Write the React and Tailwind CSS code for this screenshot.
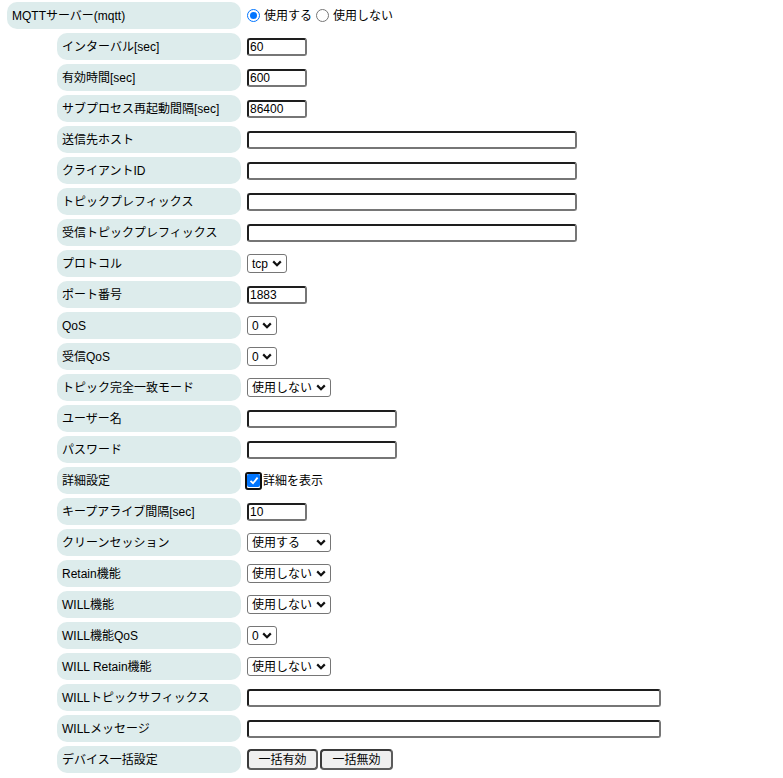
import React from "react";

const font = { fontFamily: '"Liberation Sans", Arial, "Noto Sans CJK JP", sans-serif' };

function Chevron() {
  return (
    <svg width="10" height="7" viewBox="0 0 10 7" className="shrink-0">
      <path d="M1.2 1.4 L5 5.2 L8.8 1.4" fill="none" stroke="#111" strokeWidth="2.2" />
    </svg>
  );
}

function TextBox({ value = "", width }) {
  return (
    <input
      readOnly
      value={value}
      style={{ width }}
      className="h-[18px] rounded-[3px] border-2 border-t-[#1e1e1e] border-l-[#1e1e1e] border-b-[#767676] border-r-[#767676] bg-white pl-[1px] text-[12px] leading-none text-black outline-none"
    />
  );
}

function Select({ value, width }) {
  return (
    <div
      style={{ width }}
      className="flex h-[19px] items-center justify-between rounded-[3px] border border-[#767676] bg-white pl-[4px] pr-[4px] text-[12px] text-black"
    >
      <span className="whitespace-pre">{value}</span>
      <Chevron />
    </div>
  );
}

function Radio({ checked }) {
  return checked ? (
    <span className="flex h-[13px] w-[13px] shrink-0 items-center justify-center rounded-full border-[1.5px] border-[#0075ff] bg-white">
      <span className="block h-[7px] w-[7px] rounded-full bg-[#0075ff]" />
    </span>
  ) : (
    <span className="block h-[13px] w-[13px] shrink-0 rounded-full border border-[#767676] bg-white" />
  );
}

function Checkbox() {
  return (
    <span className="flex h-[18px] w-[17px] items-center justify-center rounded-[3px] border-2 border-[#101010]">
      <span className="flex h-[13px] w-[13px] items-center justify-center rounded-[2px] bg-[#0075ff]">
        <svg width="10" height="9" viewBox="0 0 10 9">
          <path d="M1.5 4.8 L4 7.2 L8.6 1.6" fill="none" stroke="#fff" strokeWidth="1.8" />
        </svg>
      </span>
    </span>
  );
}

function Button({ children, width }) {
  return (
    <button
      style={{ width }}
      className="h-[21px] rounded-[4px] border-2 border-t-[#3a3a3a] border-l-[#3a3a3a] border-b-[#5c5c5c] border-r-[#5c5c5c] bg-[#efefef] text-[12px] leading-none text-black"
    >
      {children}
    </button>
  );
}

const rows = [
  { label: "インターバル[sec]", field: <TextBox value="60" width={60} /> },
  { label: "有効時間[sec]", field: <TextBox value="600" width={60} /> },
  { label: "サブプロセス再起動間隔[sec]", field: <TextBox value="86400" width={60} /> },
  { label: "送信先ホスト", field: <TextBox width={330} /> },
  { label: "クライアントID", field: <TextBox width={330} /> },
  { label: "トピックプレフィックス", field: <TextBox width={330} /> },
  { label: "受信トピックプレフィックス", field: <TextBox width={330} /> },
  { label: "プロトコル", field: <Select value="tcp" width={40} /> },
  { label: "ポート番号", field: <TextBox value="1883" width={60} /> },
  { label: "QoS", field: <Select value="0" width={30} /> },
  { label: "受信QoS", field: <Select value="0" width={30} /> },
  { label: "トピック完全一致モード", field: <Select value="使用しない" width={84} /> },
  { label: "ユーザー名", field: <TextBox width={150} /> },
  { label: "パスワード", field: <TextBox width={150} /> },
  {
    label: "詳細設定",
    field: (
      <div className="flex items-center text-[12px]">
        <span className="-ml-[2px]">
          <Checkbox />
        </span>
        <span className="ml-[1px]">詳細を表示</span>
      </div>
    ),
  },
  { label: "キープアライブ間隔[sec]", field: <TextBox value="10" width={60} /> },
  { label: "クリーンセッション", field: <Select value="使用する" width={84} /> },
  { label: "Retain機能", field: <Select value="使用しない" width={84} /> },
  { label: "WILL機能", field: <Select value="使用しない" width={84} /> },
  { label: "WILL機能QoS", field: <Select value="0" width={30} /> },
  { label: "WILL Retain機能", field: <Select value="使用しない" width={84} /> },
  { label: "WILLトピックサフィックス", field: <TextBox width={414} /> },
  { label: "WILLメッセージ", field: <TextBox width={414} /> },
  {
    label: "デバイス一括設定",
    field: (
      <div className="flex items-center gap-[2px]">
        <Button width={71}>一括有効</Button>
        <Button width={73}>一括無効</Button>
      </div>
    ),
  },
];

function Row({ label, top, children }) {
  return (
    <div className="flex items-center">
      <div
        className={
          top
            ? "ml-[7px] flex h-[27px] w-[234px] items-center rounded-[10px] bg-[#ddecec] px-[5px]"
            : "ml-[57px] flex h-[27px] w-[184px] items-center rounded-[10px] bg-[#ddecec] px-[5px]"
        }
      >
        <span className="whitespace-nowrap">{label}</span>
      </div>
      <div className="ml-[6px] flex items-center">{children}</div>
    </div>
  );
}

export default function App() {
  return (
    <div style={font} className="min-h-screen bg-white text-[12px] text-black">
      <div className="flex flex-col gap-[4px] pt-[2px]">
        <Row label="MQTTサーバー(mqtt)" top>
          <div className="flex items-center text-[12px]">
            <Radio checked />
            <span className="ml-[4px]">使用する</span>
            <span className="ml-[4px]">
              <Radio />
            </span>
            <span className="ml-[4px]">使用しない</span>
          </div>
        </Row>
        {rows.map((row) => (
          <Row key={row.label} label={row.label}>
            {row.field}
          </Row>
        ))}
      </div>
    </div>
  );
}
